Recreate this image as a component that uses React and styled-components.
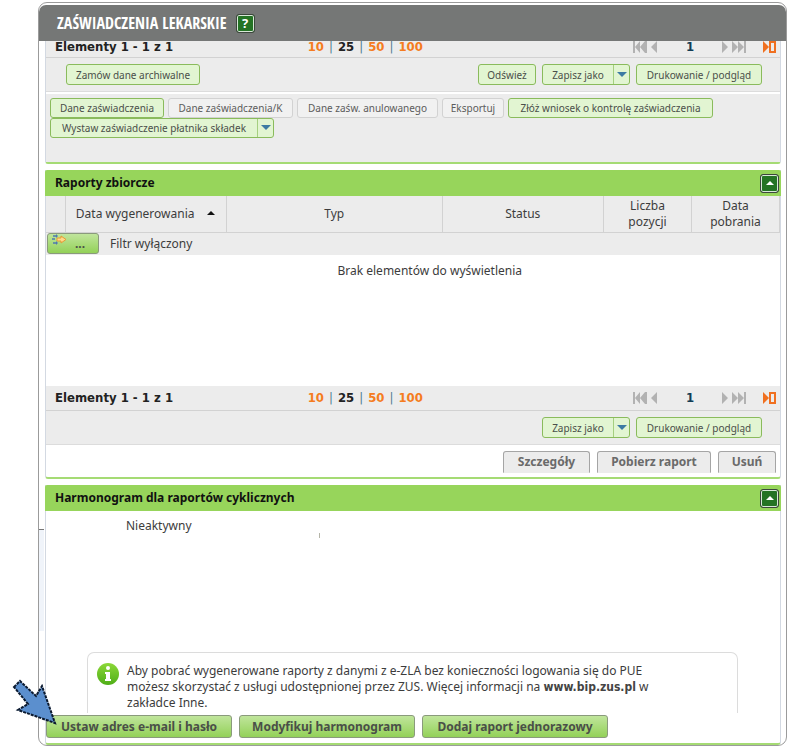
import React from 'react'
import styled, { createGlobalStyle, css } from 'styled-components'

const GlobalStyle = createGlobalStyle`
  * {
    box-sizing: border-box;
  }
  body {
    margin: 0;
    background: #fff;
    color: #3c3c3c;
    font-family: 'Noto Sans', 'Open Sans', sans-serif;
    font-size: 12px;
    line-height: 16px;
  }
  button {
    font-family: inherit;
    cursor: pointer;
  }
`

const Page = styled.div`
  position: relative;
  padding: 2px 3px 3px 38px;
`

const Window = styled.main`
  border: 1px solid #9b9b9b;
  border-radius: 9px;
  padding: 2px 5px 0 6px;
  overflow: hidden;
`

const TitleBar = styled.header`
  display: flex;
  align-items: center;
  gap: 9px;
  height: 36px;
  margin: 0 -5px 0 -6px;
  padding: 0 18px;
  background: #757776;
  border-radius: 7px 7px 0 0;

  h1 {
    margin: 0;
    color: #fff;
    font-family: 'Liberation Sans Narrow', 'Open Sans Condensed', 'Noto Sans', sans-serif;
    font-size: 16px;
    font-weight: 300;
    line-height: 20px;
  }
`

const SquareButton = styled.button`
  display: flex;
  align-items: center;
  justify-content: center;
  width: 19px;
  height: 19px;
  padding: 0;
  border: 1px solid #3c463c;
  border-radius: 3px;
  background: #247324;
  box-shadow: inset 0 0 0 1px #d8e8d8;
  color: #fff;
  font-size: 13px;
  font-weight: 700;
  line-height: 15px;
`

const Panel = styled.section`
  border: 1px solid #d3d9e2;
  border-top: 0;
  border-bottom: 2px solid #a5db74;
  border-radius: 0 0 3px 3px;
  margin-bottom: ${(p) => (p.$last ? '0' : '6px')};
`

const PanelTitle = styled.div`
  display: flex;
  align-items: center;
  justify-content: space-between;
  height: 26px;
  margin: 0 -1px;
  padding: 0 2px 0 10px;
  background: #97d55b;
  border-radius: 2px 2px 0 0;

  h2 {
    margin: 0;
    color: #111;
    font-size: 12px;
    font-weight: 700;
    line-height: 16px;
  }
`

const PagingRow = styled.div`
  display: grid;
  grid-template-columns: 35% auto 1fr;
  align-items: ${(p) => (p.$cut ? 'start' : 'center')};
  height: ${(p) => (p.$cut ? '17px' : '25px')};
  padding: 0 3px 0 9px;
  overflow: hidden;
  background: #ececec;
  border-bottom: 1px solid #d2d2d2;
  color: #222;
  font-family: 'DejaVu Sans Condensed', 'DejaVu Sans', sans-serif;
  font-size: 13px;
  font-weight: 700;
  line-height: 12px;
`

const Sizes = styled.nav`
  display: flex;
  gap: 5px;
  color: #4d7d92;
  font-weight: 400;

  a {
    color: #f57c20;
    font-weight: 700;
    text-decoration: none;
  }
  a[aria-current] {
    color: #222;
  }
`

const Pager = styled.div`
  display: flex;
  align-items: center;
  justify-content: flex-end;

  button {
    display: flex;
    padding: 0;
    border: 0;
    background: none;
  }
  span {
    width: 64px;
    text-align: center;
    color: #123c55;
  }
  button:last-child {
    margin-left: 16px;
  }
`

const Toolbar = styled.div`
  display: flex;
  align-items: center;
  gap: 6px;
  height: 34px;
  padding: 0 18px 0 20px;
  background: #ececec;
  border-bottom: 1px solid #dcdcdc;
`

const Spacer = styled.div`
  flex: 1;
`

const SmallButton = styled.button`
  display: inline-flex;
  align-items: center;
  justify-content: center;
  width: ${(p) => p.$width};
  height: ${(p) => (p.$low ? '20px' : '21px')};
  padding: 0;
  white-space: nowrap;
  border: 1px solid #8abb5c;
  border-radius: 3px;
  background: #e2f5d2;
  color: #4a4f4a;
  font-size: 10px;
  line-height: 16px;

  &:disabled {
    border-color: #d2d2d2;
    background: #f1f1f1;
    color: #5c5c5c;
  }
`

const SplitArrow = styled.i`
  display: flex;
  align-items: center;
  justify-content: center;
  align-self: stretch;
  width: 16px;
  margin-left: auto;
  border-left: 1px solid #a5cf80;
`

const SplitLabel = styled.span`
  flex: 1;
`

const Actions = styled.div`
  padding: 4px 4px 24px;
  background: #ececec;
  border-top: 2px solid #fff;
`

const ActionRow = styled.div`
  display: flex;
  gap: 4px;
`

const Table = styled.table`
  width: 100%;
  table-layout: fixed;
  border-collapse: collapse;

  th {
    height: 36px;
    padding: 0;
    border-right: 1px solid #d2d2d2;
    border-bottom: 1px solid #d2d2d2;
    background: #ececec;
    font-weight: 400;
  }
  th svg {
    margin: 0 0 2px 11px;
  }
`

const FilterCell = styled.td`
  height: 23px;
  padding: 0 0 0 1px;
  background: #ececec;

  div {
    display: flex;
    align-items: center;
    gap: 11px;
  }
`

const EmptyCell = styled.td`
  height: 131px;
  padding: 8px 0 0 34px;
  vertical-align: top;
  text-align: center;
`

const greenFill = css`
  border: 1px solid #8a9a7c;
  border-radius: 3px;
  background: linear-gradient(#c0e59c, #93d158);
  color: #4a4f48;
  font-weight: 700;
`

const FilterButton = styled.button`
  ${greenFill}
  display: flex;
  align-items: center;
  gap: 8px;
  width: 52px;
  height: 21px;
  padding: 0 4px;
  font-size: 12px;
  line-height: 16px;

  svg {
    align-self: flex-start;
  }
`

const GrayButtons = styled.div`
  display: flex;
  justify-content: flex-end;
  gap: 7px;
  height: 32px;
  padding: 6px 4px 0 0;
`

const GrayButton = styled.button`
  width: ${(p) => p.$width};
  height: 22px;
  padding: 0;
  border: 1px solid #a5a5a5;
  border-bottom-color: #ececec;
  border-radius: 3px 3px 0 0;
  background: #ececec;
  color: #6a6a6a;
  font-size: 12px;
  font-weight: 700;
  line-height: 16px;
`

const Status = styled.div`
  display: flex;
  justify-content: space-between;
  width: 194px;
  height: 141px;
  margin-left: 80px;
  padding-top: 7px;
  white-space: nowrap;
`

const Caret = styled.i`
  width: 1px;
  height: 5px;
  margin-top: 15px;
  background: #b5b5a8;
`

const Info = styled.div`
  display: flex;
  gap: 8px;
  margin: 0 42px 0 41px;
  padding: 10px 8px 2px 9px;
  border: 1px solid #dcdcdc;
  border-bottom: 0;
  border-radius: 7px 7px 0 0;

  svg {
    flex: none;
  }
  p {
    margin: 0;
  }
  b {
    color: #444;
    font-family: 'DejaVu Sans Condensed', 'DejaVu Sans', sans-serif;
    line-height: 12px;
  }
`

const GreenButtons = styled.div`
  display: flex;
  gap: 7px;
  padding: 2px 0 5px;
`

const GreenButton = styled.button`
  ${greenFill}
  width: ${(p) => p.$width};
  height: 23px;
  padding: 0;
  font-size: 12px;
  line-height: 16px;
`

const Pointer = styled.svg`
  position: absolute;
  left: 10px;
  top: 678px;
`

const EdgeMark = styled.i`
  position: absolute;
  left: 39px;
  top: 529px;
  width: 5px;
  height: 102px;
  border-top: 1px solid #777;
  background: #f0f4fa;
`

const Triangle = ({ color, up }) => (
  <svg width="10" height="6" viewBox="0 0 10 6">
    <path d={up ? 'M1 5 5 1 9 5z' : 'M0 0h10L5 5z'} fill={color} />
  </svg>
)

const CollapseButton = () => (
  <SquareButton aria-label="Zwiń">
    <Triangle color="#fff" up />
  </SquareButton>
)

const SplitButton = ({ children, ...rest }) => (
  <SmallButton {...rest}>
    <SplitLabel>{children}</SplitLabel>
    <SplitArrow>
      <Triangle color="#3d7ba3" />
    </SplitArrow>
  </SmallButton>
)

const Paging = ({ cut }) => (
  <PagingRow $cut={cut}>
    <span>Elementy 1 - 1 z 1</span>
    <Sizes>
      <a href="#10">10</a>|
      <a href="#25" aria-current="true">
        25
      </a>
      |<a href="#50">50</a>|<a href="#100">100</a>
    </Sizes>
    <Pager>
      <button aria-label="Pierwsza i poprzednia">
        <svg width="25" height="12" viewBox="0 0 25 12" fill="#b2b2b2">
          <path d="M0 0h2v12H0zM2 6l5-6v12zM7 6l5-6v12zM12 0h2v12h-2zM18 6l6-6v12z" />
        </svg>
      </button>
      <span>1</span>
      <button aria-label="Następna i ostatnia">
        <svg width="25" height="12" viewBox="0 0 25 12" fill="#b2b2b2">
          <path d="M0 0l6 6-6 6zM10 0l6 6-6 6zM16 0l6 6-6 6zM22 0h2v12h-2z" />
        </svg>
      </button>
      <button aria-label="Przejdź do strony">
        <svg width="14" height="12" viewBox="0 0 14 12">
          <path d="M0 0l6 6-6 6z" fill="#f07020" />
          <path d="M7 1h5v10H7z" fill="none" stroke="#f07020" strokeWidth="2" />
        </svg>
      </button>
    </Pager>
  </PagingRow>
)

const FilterIcon = () => (
  <svg width="15" height="12" viewBox="0 0 15 12" fill="none">
    <path d="M1 2h4M0 5h3M1 9h4" stroke="#4f78b0" strokeWidth="1.5" />
    <path d="M4 0l2 2-2 2zM4 7l2 2-2 2z" fill="#4f78b0" />
    <path d="M5 4h4V2l5 3.5L9 9V7H5z" fill="#ffd98a" stroke="#e79a35" />
  </svg>
)

const InfoIcon = () => (
  <svg width="22" height="22" viewBox="0 0 22 22">
    <defs>
      <linearGradient id="ball" x1="0" y1="0" x2="0" y2="1">
        <stop offset="0" stopColor="#8cd838" />
        <stop offset="1" stopColor="#4fae18" />
      </linearGradient>
    </defs>
    <circle cx="11" cy="11" r="11" fill="url(#ball)" />
    <circle cx="11" cy="5" r="2" fill="#fff" />
    <path d="M8 9h5v7h1v2H8v-2h1v-5H8z" fill="#fff" />
  </svg>
)

const App = () => (
  <Page>
    <GlobalStyle />
    <Window>
      <TitleBar>
        <h1>ZAŚWIADCZENIA LEKARSKIE</h1>
        <SquareButton aria-label="Pomoc">?</SquareButton>
      </TitleBar>

      <Panel>
        <Paging cut />
        <Toolbar>
          <SmallButton $width="134px">Zamów dane archiwalne</SmallButton>
          <Spacer />
          <SmallButton $width="58px">Odśwież</SmallButton>
          <SplitButton $width="88px">Zapisz jako</SplitButton>
          <SmallButton $width="126px">Drukowanie / podgląd</SmallButton>
        </Toolbar>
        <Actions>
          <ActionRow>
            <SmallButton $low $width="114px">Dane zaświadczenia</SmallButton>
            <SmallButton $low $width="125px" disabled>Dane zaświadczenia/K</SmallButton>
            <SmallButton $low $width="141px" disabled>Dane zaśw. anulowanego</SmallButton>
            <SmallButton $low $width="62px" disabled>Eksportuj</SmallButton>
            <SmallButton $low $width="205px">Złóż wniosek o kontrolę zaświadczenia</SmallButton>
          </ActionRow>
          <ActionRow>
            <SplitButton $low $width="224px">Wystaw zaświadczenie płatnika składek</SplitButton>
          </ActionRow>
        </Actions>
      </Panel>

      <Panel>
        <PanelTitle>
          <h2>Raporty zbiorcze</h2>
          <CollapseButton />
        </PanelTitle>
        <Table>
          <colgroup>
            <col style={{ width: '19px' }} />
            <col style={{ width: '22%' }} />
            <col />
            <col style={{ width: '22%' }} />
            <col style={{ width: '12%' }} />
            <col style={{ width: '12%' }} />
          </colgroup>
          <thead>
            <tr>
              <th />
              <th>
                Data wygenerowania
                <Triangle color="#111" up />
              </th>
              <th>Typ</th>
              <th>Status</th>
              <th>
                Liczba
                <br />
                pozycji
              </th>
              <th>
                Data
                <br />
                pobrania
              </th>
            </tr>
          </thead>
          <tbody>
            <tr>
              <FilterCell colSpan={6}>
                <div>
                  <FilterButton>
                    <FilterIcon />
                    ...
                  </FilterButton>
                  Filtr wyłączony
                </div>
              </FilterCell>
            </tr>
            <tr>
              <EmptyCell colSpan={6}>Brak elementów do wyświetlenia</EmptyCell>
            </tr>
          </tbody>
        </Table>
        <Paging />
        <Toolbar>
          <Spacer />
          <SplitButton $width="88px">Zapisz jako</SplitButton>
          <SmallButton $width="126px">Drukowanie / podgląd</SmallButton>
        </Toolbar>
        <GrayButtons>
          <GrayButton $width="87px">Szczegóły</GrayButton>
          <GrayButton $width="114px">Pobierz raport</GrayButton>
          <GrayButton $width="58px">Usuń</GrayButton>
        </GrayButtons>
      </Panel>

      <Panel $last>
        <PanelTitle>
          <h2>Harmonogram dla raportów cyklicznych</h2>
          <CollapseButton />
        </PanelTitle>
        <Status>
          Nieaktywny
          <Caret />
        </Status>
        <Info>
          <InfoIcon />
          <p>
            Aby pobrać wygenerowane raporty z danymi z e-ZLA bez konieczności logowania się do PUE
            <br />
            możesz skorzystać z usługi udostępnionej przez ZUS. Więcej informacji na{' '}
            <b>www.bip.zus.pl</b> w
            <br />
            zakładce Inne.
          </p>
        </Info>
        <GreenButtons>
          <GreenButton $width="186px">Ustaw adres e-mail i hasło</GreenButton>
          <GreenButton $width="176px">Modyfikuj harmonogram</GreenButton>
          <GreenButton $width="186px">Dodaj raport jednorazowy</GreenButton>
        </GreenButtons>
      </Panel>
    </Window>
    <EdgeMark />
    <Pointer width="48" height="50" viewBox="0 0 48 50">
      <path
        d="M4 9 10 3 26 18 32 8 45 45 8 32 18 26z"
        fill="#5b8fce"
        stroke="#0b1a30"
        strokeWidth="2"
        strokeDasharray="3 1"
      />
    </Pointer>
  </Page>
)

export default App
